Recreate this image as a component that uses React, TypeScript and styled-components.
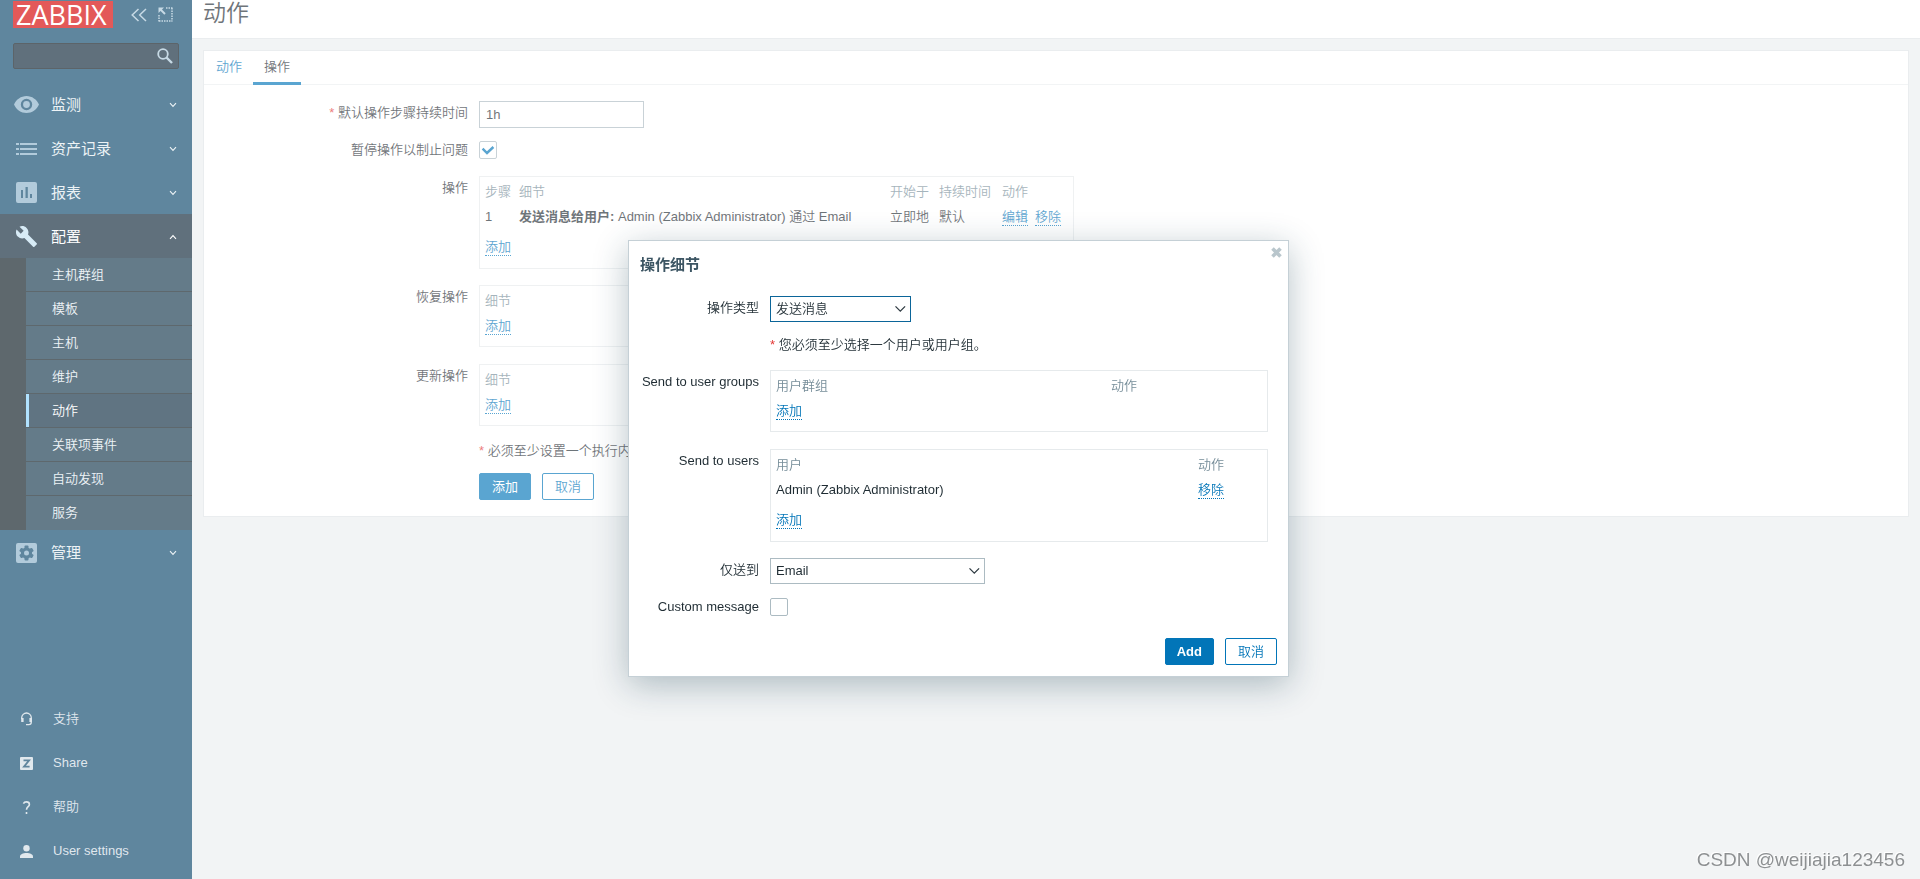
import React from "react";
import styled, { createGlobalStyle, css } from "styled-components";

const Global = createGlobalStyle`
  *, *::before, *::after { box-sizing: border-box; }
  body {
    margin: 0;
    background: #ebeef0;
    color: #1f2c33;
    font: 350 13px/18px "Liberation Sans", "Noto Sans CJK SC", sans-serif;
  }
  button, input, select { font: inherit; color: inherit; }
`;

/* ---------- shell ---------- */

const Page = styled.div`
  display: flex;
  min-height: 100vh;
`;

const Sidebar = styled.aside`
  display: flex;
  flex-direction: column;
  flex: none;
  width: 192px;
  background: #0a466a;
  color: #e4edf2;
`;

const Brand = styled.div`
  display: flex;
  align-items: center;
  padding: 1px 19px 0 13px;
`;

const Logo = styled.a`
  flex: none;
  width: 100px;
  height: 27px;
  margin-right: 18px;
  padding-left: 3px;
  background: #d40000;
  color: #fff;
  font: 27px/27px "Open Sans", sans-serif;
  text-decoration: none;
`;

const IconButton = styled.button`
  display: flex;
  padding: 0;
  border: 0;
  background: none;
  color: #a9c6d8;
  & + & {
    margin-left: 11px;
  }
`;

const Search = styled.form`
  display: flex;
  align-items: center;
  height: 26px;
  margin: 15px 13px 13px;
  padding-right: 5px;
  border: 1px solid #06121a;
  border-radius: 2px;
  background: #0b2437;
`;

const SearchInput = styled.input`
  flex: 1;
  min-width: 0;
  height: 24px;
  border: 0;
  outline: 0;
  background: none;
`;

const Menu = styled.ul`
  margin: 0;
  padding: 0;
  list-style: none;
`;

const MenuLink = styled.a<{ $open?: boolean }>`
  display: flex;
  align-items: center;
  height: 44px;
  padding: 1px 15px 0 14px;
  background: ${(p) => (p.$open ? "#0b2437" : "transparent")};
  color: ${(p) => (p.$open ? "#ffffff" : "#e4edf2")};
  font-size: 15px;
  font-weight: 400;
  text-decoration: none;
`;

const MenuIcon = styled.span<{ $open?: boolean }>`
  display: flex;
  justify-content: center;
  width: 25px;
  margin-right: 12px;
  color: ${(p) => (p.$open ? "#c2e0f2" : "#89afc8")};
`;

const MenuText = styled.span`
  flex: 1;
`;

const SubMenu = styled.ul`
  margin: 0;
  padding: 0 0 0 26px;
  list-style: none;
  background: #081720;
`;

const SubItem = styled.li`
  height: 34px;
  border-bottom: 1px solid #081720;
  &:last-child {
    border-bottom: 0;
  }
`;

const SubLink = styled.a<{ $active?: boolean }>`
  display: block;
  height: 100%;
  padding-left: ${(p) => (p.$active ? 23 : 26)}px;
  border-left: ${(p) => (p.$active ? "3px solid #87d3ff" : "0")};
  background: ${(p) => (p.$active ? "#0c2a3f" : "#11354b")};
  color: ${(p) => (p.$active ? "#ffffff" : "#e4edf2")};
  line-height: 33px;
  text-decoration: none;
`;

const FootMenu = styled(Menu)`
  margin-top: auto;
  padding-bottom: 6px;
`;

const FootLink = styled.a`
  display: flex;
  align-items: center;
  height: 44px;
  padding-left: 20px;
  color: #d0dce4;
  text-decoration: none;
  svg {
    margin-right: 20px;
  }
`;

const Main = styled.main`
  flex: 1;
  min-width: 0;
`;

const PageHead = styled.header`
  height: 39px;
  padding-left: 11px;
  border-bottom: 1px solid #dfe4e7;
  background: #fff;
`;

const PageTitle = styled.h1`
  margin: 0;
  font-size: 23px;
  line-height: 26px;
  font-weight: 350;
`;

const Card = styled.section`
  margin: 11px 11px 0;
  padding-bottom: 16px;
  border: 1px solid #dfe4e7;
  background: #fff;
`;

const Tabs = styled.nav`
  display: flex;
  height: 34px;
  padding-left: 1px;
  border-bottom: 1px solid #ebeef0;
`;

const Tab = styled.a<{ $active?: boolean }>`
  height: 34px;
  padding: 0 11px;
  border-bottom: ${(p) => (p.$active ? "3px solid #0275b8" : "0")};
  color: ${(p) => (p.$active ? "#1f2c33" : "#0275b8")};
  line-height: 32px;
  text-decoration: none;
`;

/* ---------- form parts ---------- */

const Form = styled.form<{ $labels: number }>`
  --labels: ${(p) => p.$labels}px;
`;

const Row = styled.div<{ $gap: number; $center?: boolean }>`
  display: grid;
  grid-template-columns: var(--labels) minmax(0, 1fr);
  column-gap: 11px;
  align-items: ${(p) => (p.$center ? "center" : "start")};
  margin-top: ${(p) => p.$gap}px;
  ${(p) =>
    !p.$center &&
    css`
      > :first-child {
        line-height: 24px;
      }
    `}
`;

const labelStyle = css`
  text-align: right;
  white-space: nowrap;
`;
const Label = styled.label`
  ${labelStyle}
`;
const Caption = styled.span`
  ${labelStyle}
`;

const Required = styled.span`
  &::before {
    content: "* ";
    color: #e33734;
  }
`;

const Note = styled(Required)`
  grid-column: 2;
  && {
    line-height: 18px;
  }
`;

const TextInput = styled.input`
  width: 165px;
  height: 27px;
  padding: 0 6px;
  border: 1px solid #acbbc2;
  background: #fff;
`;

const Stack = styled.span`
  display: inline-grid;
  justify-self: start;
  > * {
    grid-area: 1 / 1;
  }
  > svg {
    align-self: center;
    justify-self: end;
    pointer-events: none;
  }
`;

const Check = styled.input`
  appearance: none;
  width: 18px;
  height: 18px;
  margin: 0;
  border: 1px solid #acbbc2;
  border-radius: 2px;
  background: #fff;
`;

const Select = styled.select<{ $width: number; $focus?: boolean }>`
  appearance: none;
  width: ${(p) => p.$width}px;
  height: 26px;
  padding: 0 24px 0 5px;
  border: 1px solid ${(p) => (p.$focus ? "#0b6599" : "#acbbc2")};
  border-radius: 0;
  outline: 0;
  background: #fff;
`;

const Button = styled.button<{ $ghost?: boolean; $strong?: boolean }>`
  height: 27px;
  padding: 0 ${(p) => (p.$strong ? 11 : 12)}px;
  border: 1px solid #0275b8;
  border-radius: 2px;
  background: ${(p) => (p.$ghost ? "#fff" : "#0275b8")};
  color: ${(p) => (p.$ghost ? "#0275b8" : "#fff")};
  font-weight: ${(p) => (p.$strong ? 700 : p.$ghost ? 350 : 400)};
`;

const Buttons = styled.div<{ $end?: boolean }>`
  grid-column: 2;
  display: flex;
  justify-content: ${(p) => (p.$end ? "flex-end" : "flex-start")};
  gap: 11px;
`;

/* ---------- tables ---------- */

const TableBox = styled.div<{ $width: number }>`
  width: ${(p) => p.$width}px;
  max-width: 100%;
  padding: 2px 5px 8px;
  border: 1px solid #e6eaec;
`;

const Table = styled.table`
  width: 100%;
  table-layout: fixed;
  border-collapse: collapse;
  th,
  td {
    height: 25px;
    padding: 0;
    font-weight: inherit;
    text-align: left;
    white-space: nowrap;
  }
  th {
    color: #768d99;
  }
`;

const AddCell = styled.td<{ $after?: boolean }>`
  &&& {
    height: ${(p) => (p.$after ? 31 : 25)}px;
    padding-top: ${(p) => (p.$after ? 4 : 0)}px;
  }
`;

const Action = styled.button`
  height: 17px;
  padding: 0;
  border: 0;
  border-bottom: 1px dotted #0275b8;
  background: none;
  color: #0275b8;
  line-height: 16px;
  & + & {
    margin-left: 7px;
  }
`;

const Strong = styled.b`
  font-weight: 700;
`;

/* ---------- dialogue ---------- */

const Overlay = styled.div`
  position: fixed;
  inset: 0;
  background: rgba(255, 255, 255, 0.35);
`;

const DialogLayer = styled.div`
  position: fixed;
  inset: 0;
  display: flex;
  justify-content: center;
  align-items: flex-start;
  padding: 240px 3px 0 0;
`;

const Dialog = styled.div`
  width: 661px;
  padding: 0 11px 11px;
  border: 1px solid #c5d0d6;
  background: #fff;
  box-shadow: 0 8px 32px rgba(31, 68, 85, 0.32);
`;

const DialogHead = styled.div`
  display: flex;
  justify-content: space-between;
  align-items: flex-start;
`;

const DialogTitle = styled.h2`
  margin: 12px 0 0;
  color: #3c5563;
  font-size: 15px;
  line-height: 24px;
  font-weight: 700;
`;

const Close = styled.button`
  display: flex;
  margin: 6px -5px 0 0;
  padding: 0;
  border: 0;
  background: none;
`;

const DialogBody = styled.div`
  padding-right: 9px;
`;

const DialogFoot = styled.div`
  margin-top: 22px;
`;

const Watermark = styled.div`
  position: fixed;
  right: 15px;
  bottom: 7px;
  color: #8d9092;
  font-size: 19px;
  line-height: 24px;
  text-shadow: -1px -1px 0 #fff;
`;

/* ---------- icons ---------- */

const Chevron = ({ up }: { up?: boolean }) => (
  <svg width="8" height="6" viewBox="0 0 8 6" fill="none" stroke="currentColor" strokeWidth="1.1">
    <path d={up ? "M1 4.8 4 1.6 7 4.8" : "M1 1.2 4 4.4 7 1.2"} />
  </svg>
);

const SelectArrow = () => (
  <svg width="16" height="8" viewBox="0 0 16 8" fill="none" stroke="#2f3b42" strokeWidth="1.3">
    <path d="M.5 1.4 5.300 6.2 10.100 1.4" />
  </svg>
);

const Tick = () => (
  <svg width="18" height="18" viewBox="0 0 18 18" fill="none" stroke="#0275b8" strokeWidth="2.4">
    <path d="M3.6 7.6 8 12 14.4 6" />
  </svg>
);

const icons: Record<string, React.ReactNode> = {
  eye: (
    <svg width="25" height="17" viewBox="0 0 25 17" fill="currentColor">
      <path
        fillRule="evenodd"
        d="M12.5 0C7 0 2.200 3.500 0 8.500 2.200 13.500 7 17 12.500 17S22.800 13.500 25 8.500C22.800 3.500 18 0 12.500 0Zm0 14.200a5.700 5.700 0 1 1 0-11.400 5.700 5.700 0 0 1 0 11.400Zm0-2.300a3.400 3.400 0 1 0 0-6.800 3.400 3.400 0 0 0 0 6.800Z"
      />
    </svg>
  ),
  list: (
    <svg width="21" height="12" viewBox="0 0 21 12" fill="currentColor">
      <path d="M0 0h3v2H0zM4 0h17v2H4zM0 5h3v2H0zM4 5h17v2H4zM0 10h3v2H0zM4 10h17v2H4z" />
    </svg>
  ),
  chart: (
    <svg width="21" height="21" viewBox="0 0 21 21" fill="currentColor">
      <path
        fillRule="evenodd"
        d="M2 0h17a2 2 0 0 1 2 2v17a2 2 0 0 1-2 2H2a2 2 0 0 1-2-2V2a2 2 0 0 1 2-2Zm3 8v8h2V8Zm4.500-3v11h2.300V5Zm4.500 7v4h2v-4Z"
      />
    </svg>
  ),
  wrench: (
    <svg width="21" height="21" viewBox="1 1 22 22" fill="currentColor">
      <path d="M22.700 19l-9.100-9.100c.9-2.300.4-5-1.500-6.900-2-2-5-2.400-7.400-1.300L9 6 6 9 1.600 4.700C.4 7.100.9 10.100 2.900 12.100c1.900 1.900 4.600 2.400 6.900 1.500l9.100 9.100c.4.4 1 .4 1.400 0l2.300-2.300c.5-.4.5-1.100.1-1.400z" />
    </svg>
  ),
  gear: (
    <svg width="21" height="20" viewBox="0 0 21 20" fill="currentColor">
      <path d="M2 0h17a2 2 0 0 1 2 2v16a2 2 0 0 1-2 2H2a2 2 0 0 1-2-2V2a2 2 0 0 1 2-2Z" />
      <g fill="#0a466a">
        <circle cx="10.500" cy="10" r="5.600" />
        <rect x="8.500" y="2.600" width="4" height="14.800" rx="1" />
        <rect x="8.500" y="2.600" width="4" height="14.800" rx="1" transform="rotate(60 10.500 10)" />
        <rect x="8.500" y="2.600" width="4" height="14.800" rx="1" transform="rotate(120 10.500 10)" />
      </g>
      <circle cx="10.500" cy="10" r="2.500" />
    </svg>
  ),
  support: (
    <svg width="13" height="14" viewBox="0 0 13 14" fill="none" stroke="currentColor" strokeWidth="1.300">
      <path d="M1.700 7V5.800C1.700 3 4 1 6.500 1s4.800 2 4.800 4.800V10c0 1.600-1 2.600-2.500 2.600H6" />
      <path d="M2.400 6v4M10.600 6v4" strokeWidth="2.400" />
    </svg>
  ),
  share: (
    <svg width="13" height="13" viewBox="0 0 13 13">
      <rect width="13" height="13" rx="1" fill="currentColor" />
      <path d="M3.500 3.400h5.600L4 9.600h5.600" fill="none" stroke="#0a466a" strokeWidth="1.800" />
    </svg>
  ),
  help: (
    <svg width="13" height="13" viewBox="0 0 13 13" fill="none" stroke="currentColor" strokeWidth="1.600">
      <path d="M3.400 2.600C4 1.400 5 .9 6.400.9c1.800 0 3 .9 3 2.500 0 2.300-2.900 2.400-2.900 5.400M6.500 10.900V13" />
    </svg>
  ),
  user: (
    <svg width="13" height="13" viewBox="0 0 13 13" fill="currentColor">
      <circle cx="6.500" cy="3.200" r="3.200" />
      <path d="M0 13v-1.500C0 9.300 3 8 6.500 8S13 9.300 13 11.500V13z" />
    </svg>
  ),
};

/* ---------- data ---------- */

const topMenu = [
  { icon: "eye", text: "监测" },
  { icon: "list", text: "资产记录" },
  { icon: "chart", text: "报表" },
];
const subMenu = ["主机群组", "模板", "主机", "维护", "动作", "关联项事件", "自动发现", "服务"];
const footMenu = [
  { icon: "support", text: "支持" },
  { icon: "share", text: "Share" },
  { icon: "help", text: "帮助" },
  { icon: "user", text: "User settings" },
];

const MenuEntry = ({ icon, text, open }: { icon: string; text: string; open?: boolean }) => (
  <MenuLink href="#" $open={open}>
    <MenuIcon $open={open}>{icons[icon]}</MenuIcon>
    <MenuText>{text}</MenuText>
    <Chevron up={open} />
  </MenuLink>
);

const DetailTable = () => (
  <TableBox $width={595}>
    <Table>
      <thead>
        <tr>
          <th>细节</th>
        </tr>
      </thead>
      <tbody>
        <tr>
          <AddCell>
            <Action type="button">添加</Action>
          </AddCell>
        </tr>
      </tbody>
    </Table>
  </TableBox>
);

export default function App() {
  return (
    <>
      <Global />
      <Page>
        <Sidebar>
          <Brand>
            <Logo href="#">ZABBIX</Logo>
            <IconButton aria-label="Collapse sidebar">
              <svg width="16" height="14" viewBox="0 0 16 14" fill="none" stroke="currentColor" strokeWidth="1.5">
                <path d="M7.500 1 1.200 7l6.300 6M15 1 8.700 7l6.300 6" />
              </svg>
            </IconButton>
            <IconButton aria-label="Hide sidebar">
              <svg width="15" height="15" viewBox="0 0 15 15" fill="none" stroke="currentColor">
                <path d="M8 1h6.500M14 1v13.500M1 8v6.500M1 14h13" strokeWidth="1.500" strokeDasharray="1.500 1" />
                <path d="M2 2l5 5" strokeWidth="2" />
                <path d="M.5.5h5.500l-5.500 5.500z" fill="currentColor" stroke="none" />
              </svg>
            </IconButton>
          </Brand>
          <Search>
            <SearchInput aria-label="Search" />
            <svg width="16" height="16" viewBox="0 0 16 16" fill="none" stroke="#a9c6d8" strokeWidth="1.800">
              <circle cx="6" cy="6" r="4.800" />
              <path d="M9.500 9.500 15 15" strokeWidth="2.400" />
            </svg>
          </Search>
          <Menu>
            {topMenu.map((m) => (
              <li key={m.text}>
                <MenuEntry {...m} />
              </li>
            ))}
            <li>
              <MenuEntry icon="wrench" text="配置" open />
              <SubMenu>
                {subMenu.map((s) => (
                  <SubItem key={s}>
                    <SubLink href="#" $active={s === "动作"}>
                      {s}
                    </SubLink>
                  </SubItem>
                ))}
              </SubMenu>
            </li>
            <li>
              <MenuEntry icon="gear" text="管理" />
            </li>
          </Menu>
          <FootMenu>
            {footMenu.map((m) => (
              <li key={m.text}>
                <FootLink href="#">
                  {icons[m.icon]}
                  {m.text}
                </FootLink>
              </li>
            ))}
          </FootMenu>
        </Sidebar>

        <Main>
          <PageHead>
            <PageTitle>动作</PageTitle>
          </PageHead>
          <Card>
            <Tabs>
              <Tab href="#">动作</Tab>
              <Tab href="#" $active>
                操作
              </Tab>
            </Tabs>
            <Form $labels={264}>
              <Row $gap={16}>
                <Label htmlFor="period">
                  <Required>默认操作步骤持续时间</Required>
                </Label>
                <TextInput id="period" defaultValue="1h" />
              </Row>
              <Row $gap={13} $center>
                <Label htmlFor="pause">暂停操作以制止问题</Label>
                <Stack>
                  <Check id="pause" type="checkbox" defaultChecked />
                  <Tick />
                </Stack>
              </Row>
              <Row $gap={17}>
                <Caption>操作</Caption>
                <TableBox $width={595}>
                  <Table>
                    <colgroup>
                      <col width="34" />
                      <col />
                      <col width="49" />
                      <col width="63" />
                      <col width="66" />
                    </colgroup>
                    <thead>
                      <tr>
                        <th>步骤</th>
                        <th>细节</th>
                        <th>开始于</th>
                        <th>持续时间</th>
                        <th>动作</th>
                      </tr>
                    </thead>
                    <tbody>
                      <tr>
                        <td>1</td>
                        <td>
                          <Strong>发送消息给用户:</Strong> Admin (Zabbix Administrator) 通过 Email
                        </td>
                        <td>立即地</td>
                        <td>默认</td>
                        <td>
                          <Action type="button">编辑</Action>
                          <Action type="button">移除</Action>
                        </td>
                      </tr>
                      <tr>
                        <AddCell $after colSpan={5}>
                          <Action type="button">添加</Action>
                        </AddCell>
                      </tr>
                    </tbody>
                  </Table>
                </TableBox>
              </Row>
              <Row $gap={16}>
                <Caption>恢复操作</Caption>
                <DetailTable />
              </Row>
              <Row $gap={17}>
                <Caption>更新操作</Caption>
                <DetailTable />
              </Row>
              <Row $gap={16}>
                <Note>必须至少设置一个执行内容</Note>
              </Row>
              <Row $gap={13}>
                <Buttons>
                  <Button type="button">添加</Button>
                  <Button type="button" $ghost>
                    取消
                  </Button>
                </Buttons>
              </Row>
            </Form>
          </Card>
        </Main>
      </Page>

      <Overlay />
      <DialogLayer>
        <Dialog role="dialog" aria-labelledby="dialog-title">
          <DialogHead>
            <DialogTitle id="dialog-title">操作细节</DialogTitle>
            <Close aria-label="Close">
              <svg width="11" height="11" viewBox="0 0 11 11" stroke="#b9c6cc" strokeWidth="3.600">
                <path d="M1.500 1.500l8 8M9.500 1.500l-8 8" />
              </svg>
            </Close>
          </DialogHead>
          <Form $labels={119}>
            <DialogBody>
              <Row $gap={19}>
                <Label htmlFor="optype">操作类型</Label>
                <Stack>
                  <Select id="optype" $width={141} $focus>
                    <option>发送消息</option>
                  </Select>
                  <SelectArrow />
                </Stack>
              </Row>
              <Row $gap={14}>
                <Note>您必须至少选择一个用户或用户组。</Note>
              </Row>
              <Row $gap={16}>
                <Caption>Send to user groups</Caption>
                <TableBox $width={498}>
                  <Table>
                    <colgroup>
                      <col />
                      <col width="151" />
                    </colgroup>
                    <thead>
                      <tr>
                        <th>用户群组</th>
                        <th>动作</th>
                      </tr>
                    </thead>
                    <tbody>
                      <tr>
                        <AddCell colSpan={2}>
                          <Action type="button">添加</Action>
                        </AddCell>
                      </tr>
                    </tbody>
                  </Table>
                </TableBox>
              </Row>
              <Row $gap={17}>
                <Caption>Send to users</Caption>
                <TableBox $width={498}>
                  <Table>
                    <colgroup>
                      <col />
                      <col width="64" />
                    </colgroup>
                    <thead>
                      <tr>
                        <th>用户</th>
                        <th>动作</th>
                      </tr>
                    </thead>
                    <tbody>
                      <tr>
                        <td>Admin (Zabbix Administrator)</td>
                        <td>
                          <Action type="button">移除</Action>
                        </td>
                      </tr>
                      <tr>
                        <AddCell $after colSpan={2}>
                          <Action type="button">添加</Action>
                        </AddCell>
                      </tr>
                    </tbody>
                  </Table>
                </TableBox>
              </Row>
              <Row $gap={16}>
                <Label htmlFor="media">仅送到</Label>
                <Stack>
                  <Select id="media" $width={215}>
                    <option>Email</option>
                  </Select>
                  <SelectArrow />
                </Stack>
              </Row>
              <Row $gap={14} $center>
                <Label htmlFor="custom">Custom message</Label>
                <Check id="custom" type="checkbox" />
              </Row>
            </DialogBody>
            <DialogFoot>
              <Buttons $end>
                <Button type="button" $strong>
                  Add
                </Button>
                <Button type="button" $ghost>
                  取消
                </Button>
              </Buttons>
            </DialogFoot>
          </Form>
        </Dialog>
      </DialogLayer>
      <Watermark>CSDN @weijiajia123456</Watermark>
    </>
  );
}
